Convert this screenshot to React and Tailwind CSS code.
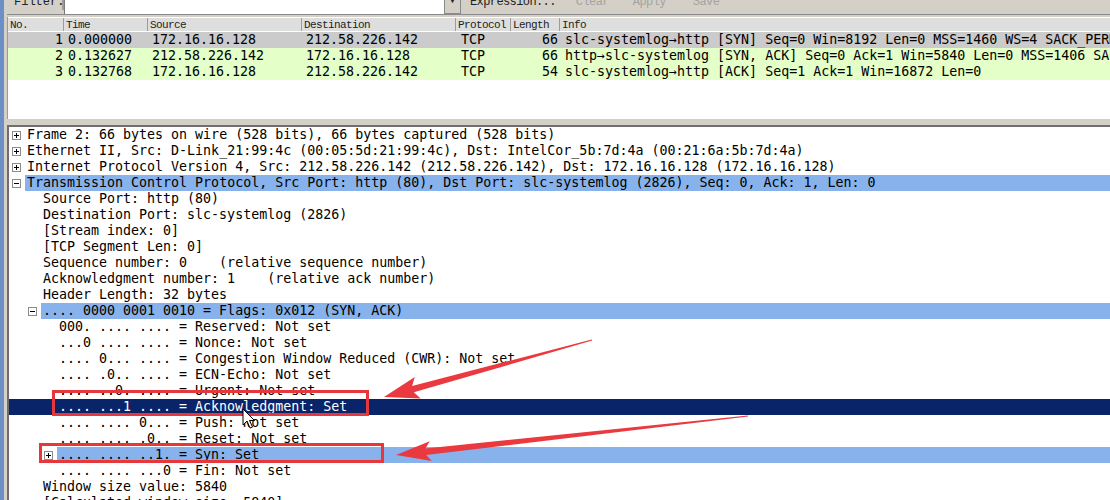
import React from 'react';

const MONO = { fontFamily: '"DejaVu Sans Mono", "Liberation Mono", monospace' };
const UI = { fontFamily: '"Liberation Mono", "DejaVu Sans Mono", monospace' };

const packets = [
  {
    no: 1, time: '0.000000', src: '172.16.16.128', dst: '212.58.226.142', proto: 'TCP', len: 66,
    info: 'slc-systemlog→http [SYN] Seq=0 Win=8192 Len=0 MSS=1460 WS=4 SACK_PERM=1',
    bg: 'bg-[#cbcbcb]',
  },
  {
    no: 2, time: '0.132627', src: '212.58.226.142', dst: '172.16.16.128', proto: 'TCP', len: 66,
    info: 'http→slc-systemlog [SYN, ACK] Seq=0 Ack=1 Win=5840 Len=0 MSS=1406 SACK_PERM=1',
    bg: 'bg-[#e4ffc7]',
  },
  {
    no: 3, time: '0.132768', src: '172.16.16.128', dst: '212.58.226.142', proto: 'TCP', len: 54,
    info: 'slc-systemlog→http [ACK] Seq=1 Ack=1 Win=16872 Len=0',
    bg: 'bg-[#e4ffc7]',
  },
];

const tree = [
  { lvl: 0, exp: '+', text: 'Frame 2: 66 bytes on wire (528 bits), 66 bytes captured (528 bits)' },
  { lvl: 0, exp: '+', text: 'Ethernet II, Src: D-Link_21:99:4c (00:05:5d:21:99:4c), Dst: IntelCor_5b:7d:4a (00:21:6a:5b:7d:4a)' },
  { lvl: 0, exp: '+', text: 'Internet Protocol Version 4, Src: 212.58.226.142 (212.58.226.142), Dst: 172.16.16.128 (172.16.16.128)' },
  { lvl: 0, exp: '-', hl: 'blue', text: 'Transmission Control Protocol, Src Port: http (80), Dst Port: slc-systemlog (2826), Seq: 0, Ack: 1, Len: 0' },
  { lvl: 1, text: 'Source Port: http (80)' },
  { lvl: 1, text: 'Destination Port: slc-systemlog (2826)' },
  { lvl: 1, text: '[Stream index: 0]' },
  { lvl: 1, text: '[TCP Segment Len: 0]' },
  { lvl: 1, text: 'Sequence number: 0    (relative sequence number)' },
  { lvl: 1, text: 'Acknowledgment number: 1    (relative ack number)' },
  { lvl: 1, text: 'Header Length: 32 bytes' },
  { lvl: 1, exp: '-', hl: 'blue', text: '.... 0000 0001 0010 = Flags: 0x012 (SYN, ACK)' },
  { lvl: 2, text: '000. .... .... = Reserved: Not set' },
  { lvl: 2, text: '...0 .... .... = Nonce: Not set' },
  { lvl: 2, text: '.... 0... .... = Congestion Window Reduced (CWR): Not set' },
  { lvl: 2, text: '.... .0.. .... = ECN-Echo: Not set' },
  { lvl: 2, text: '.... ..0. .... = Urgent: Not set' },
  { lvl: 2, hl: 'navy', text: '.... ...1 .... = Acknowledgment: Set' },
  { lvl: 2, text: '.... .... 0... = Push: Not set' },
  { lvl: 2, text: '.... .... .0.. = Reset: Not set' },
  { lvl: 2, exp: '+', hl: 'blue', text: '.... .... ..1. = Syn: Set' },
  { lvl: 2, text: '.... .... ...0 = Fin: Not set' },
  { lvl: 1, text: 'Window size value: 5840' },
  { lvl: 1, text: '[Calculated window size: 5840]' },
];

const indent = ['pl-[1px]', 'pl-[17px]', 'pl-[33px]'];

function Expander({ kind }) {
  return (
    <svg width="9" height="9" viewBox="0 0 9 9" className="ml-[2px] block">
      <rect x="0.5" y="0.5" width="8" height="8" fill="#fff" stroke="#8a8a8a" />
      <line x1="2" y1="4.5" x2="7" y2="4.5" stroke="#000" />
      {kind === '+' && <line x1="4.5" y1="2" x2="4.5" y2="7" stroke="#000" />}
    </svg>
  );
}

function TreeRow({ row }) {
  const navy = row.hl === 'navy';
  return (
    <div className={`h-[16px] flex items-center ${indent[row.lvl]} ${navy ? 'bg-[#0a246a] text-white' : 'text-black'}`}>
      <div className="w-[15px] h-[16px] flex items-center shrink-0">
        {row.exp && <Expander kind={row.exp} />}
      </div>
      <div className={`flex-1 h-[16px] pl-[2px] leading-[16px] whitespace-pre ${row.hl === 'blue' ? 'bg-[#88b2ec]' : ''}`}>
        {row.text}
      </div>
    </div>
  );
}

function arrowPoints(tx, ty, hx, hy, headLen, headHalf, shaftHalf, tailHalf) {
  const dx = hx - tx;
  const dy = hy - ty;
  const L = Math.hypot(dx, dy);
  const ux = dx / L;
  const uy = dy / L;
  const nx = -uy;
  const ny = ux;
  const bx = hx - ux * headLen;
  const by = hy - uy * headLen;
  const pts = [
    [tx + nx * tailHalf, ty + ny * tailHalf],
    [bx + nx * shaftHalf, by + ny * shaftHalf],
    [bx - ux * 5 + nx * headHalf, by - uy * 5 + ny * headHalf],
    [hx, hy],
    [bx - ux * 5 - nx * headHalf, by - uy * 5 - ny * headHalf],
    [bx - nx * shaftHalf, by - ny * shaftHalf],
    [tx - nx * tailHalf, ty - ny * tailHalf],
  ];
  return pts.map((p) => `${p[0].toFixed(1)},${p[1].toFixed(1)}`).join(' ');
}

function Annotations() {
  return (
    <svg className="absolute inset-0 pointer-events-none" width="1110" height="500" viewBox="0 0 1110 500">
      <rect x="53.5" y="391.5" width="314" height="23" fill="none" stroke="#e5373c" strokeWidth="3" />
      <rect x="40.5" y="444.5" width="342" height="17" fill="none" stroke="#e5373c" strokeWidth="3" />
      <polygon points={arrowPoints(592, 340, 384, 397, 30, 11, 3.2, 0.6)} fill="#ea3a3f" />
      <polygon points={arrowPoints(748, 416, 396, 455, 30, 10, 3.2, 0.6)} fill="#ea3a3f" />
      {/* mouse pointer */}
      <g transform="translate(243 409)">
        <path d="M0 0 L0 16 L4 12 L7 19 L9.5 18 L6.5 11.5 L11.5 11.5 Z" fill="#fff" stroke="#000" strokeWidth="1" />
      </g>
    </svg>
  );
}

function HeaderCell({ w, children, last }) {
  return (
    <div className={`${w} h-full shrink-0 pl-[2px] pt-[1px] leading-[13px] text-[11px] tracking-[-0.6px] text-[#222] ${last ? 'flex-1' : 'border-r border-[#9c9c9c]'}`}>
      {children}
    </div>
  );
}

export default function App() {
  return (
    <div className="w-[1110px] h-[500px] overflow-hidden relative flex bg-[#d4d0c8]">
      <div className="w-[4px] h-full bg-[#6b8fc6] shrink-0" />
      <div className="flex-1 flex flex-col pl-[3px] min-w-0">
        {/* filter toolbar */}
        <div className="h-[15px] shrink-0 flex items-start overflow-hidden border-b border-[#8a8a8a] text-[12px]" style={UI}>
          <div className="ml-[1px] w-[56px] h-full border-r-2 border-[#9a9a9a] pl-[6px] -mt-[4px] leading-[12px] text-[#222]">Filter:</div>
          <div className="w-[380px] h-full bg-white border-l border-[#7a7a7a]" />
          <div className="w-[17px] h-full bg-[#d4d0c8] border border-t-0 border-[#8a8a8a] flex justify-center">
            <span className="text-[9px] leading-[9px] -mt-[3px] text-[#222]">▼</span>
          </div>
          <div className="ml-[9px] -mt-[4px] leading-[12px] text-[#222] tracking-[-0.6px]">Expression...</div>
          <div className="ml-[20px] -mt-[4px] leading-[12px] text-[#a3a3a3] tracking-[-0.6px]">Clear</div>
          <div className="ml-[24px] -mt-[4px] leading-[12px] text-[#a3a3a3] tracking-[-0.6px]">Apply</div>
          <div className="ml-[27px] -mt-[4px] leading-[12px] text-[#a3a3a3] tracking-[-0.6px]">Save</div>
        </div>
        <div className="h-[2px] shrink-0" />

        {/* packet list */}
        <div className="h-[102px] shrink-0 bg-white border-l border-[#9a9a9a] flex flex-col">
          <div className="h-[15px] shrink-0 flex border-t border-white border-b border-[#8a8a8a] bg-[#dedede]" style={UI}>
            <HeaderCell w="w-[56px]">No.</HeaderCell>
            <HeaderCell w="w-[84px]">Time</HeaderCell>
            <HeaderCell w="w-[154px]">Source</HeaderCell>
            <HeaderCell w="w-[154px]">Destination</HeaderCell>
            <HeaderCell w="w-[55px]">Protocol</HeaderCell>
            <HeaderCell w="w-[49px]">Length</HeaderCell>
            <HeaderCell w="" last>Info</HeaderCell>
          </div>
          <div className="text-[13.3px] text-black" style={MONO}>
            {packets.map((p) => (
              <div key={p.no} className={`h-[16px] flex leading-[16px] whitespace-nowrap ${p.bg}`}>
                <div className="w-[56px] text-right pr-[1px] shrink-0">{p.no}</div>
                <div className="w-[84px] pl-[4px] shrink-0">{p.time}</div>
                <div className="w-[154px] pl-[4px] shrink-0">{p.src}</div>
                <div className="w-[154px] pl-[4px] shrink-0">{p.dst}</div>
                <div className="w-[55px] pl-[5px] shrink-0">{p.proto}</div>
                <div className="w-[49px] text-right pr-[2px] shrink-0">{p.len}</div>
                <div className="flex-1 pl-[5px] overflow-hidden">{p.info}</div>
              </div>
            ))}
          </div>
        </div>

        {/* splitter */}
        <div className="h-[6px] shrink-0 bg-[#d4d0c8]" />

        {/* packet details */}
        <div className="flex-1 bg-white border-l-2 border-t-2 border-[#6e6e6e] overflow-hidden text-[13.3px]" style={MONO}>
          {tree.map((row, i) => (
            <TreeRow key={i} row={row} />
          ))}
        </div>
      </div>
      <Annotations />
    </div>
  );
}
